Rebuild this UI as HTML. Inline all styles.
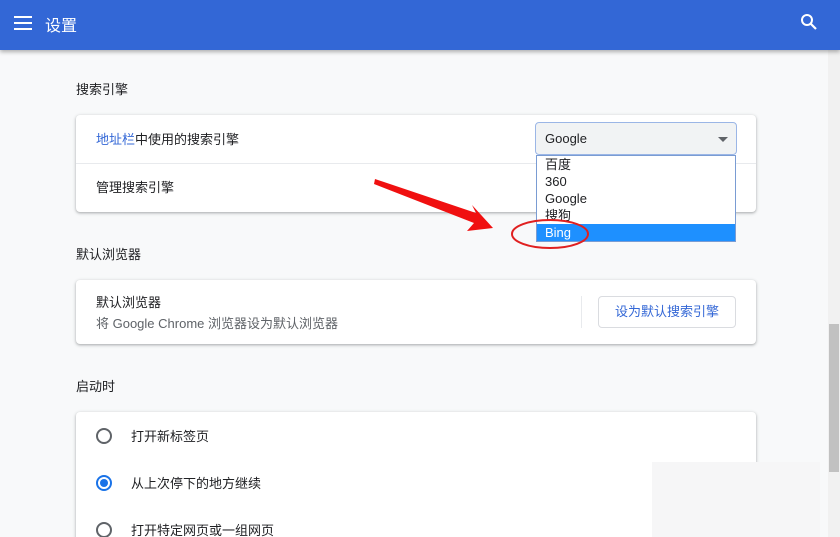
<!DOCTYPE html><html><head><meta charset="utf-8"><style>
*{margin:0;padding:0;box-sizing:border-box}
html,body{width:840px;height:537px;overflow:hidden}
body{background:#f8f9fa;font-family:"Liberation Sans","Noto Sans CJK SC",sans-serif;position:relative;color:#202124;font-size:13px}
.hdr{position:absolute;left:0;top:0;width:840px;height:50px;background:#3367d6;box-shadow:0 2px 4px rgba(0,0,0,.3);z-index:2}
.hdr .t{position:absolute;left:45px;top:12px;color:#fff;font-size:16px}
.card{position:absolute;left:76px;width:680px;background:#fff;border-radius:4px;box-shadow:0 1px 2px rgba(60,64,67,.3),0 1px 3px 1px rgba(60,64,67,.12)}
.lbl{position:absolute;left:76px;font-size:13px;color:#202124}
.abs{position:absolute}
.sb{position:absolute;left:828px;top:50px;width:12px;height:487px;background:#f1f1f1}
</style></head><body>
<div class="hdr">
<svg class="abs" style="left:14px;top:16px" width="18" height="14"><rect y="0" width="18" height="2" fill="#fff"/><rect y="6" width="18" height="2" fill="#fff"/><rect y="12" width="18" height="2" fill="#fff"/></svg>
<div class="t">设置</div>
<svg class="abs" style="left:800px;top:13px" width="18" height="18"><circle cx="7" cy="7" r="5" stroke="#fff" stroke-width="2" fill="none"/><line x1="11" y1="11" x2="16" y2="16" stroke="#fff" stroke-width="2.2"/></svg>
</div>
<div class="lbl" style="top:79px">搜索引擎</div>
<div class="card" style="top:115px;height:97px">
<div class="abs" style="left:20px;top:14px"><span style="color:#3367d6">地址栏</span>中使用的搜索引擎</div>
<div class="abs" style="left:0;top:48px;width:680px;height:1px;background:#e8eaed"></div>
<div class="abs" style="left:20px;top:62px">管理搜索引擎</div>
</div>
<div class="abs" style="left:535px;top:122px;width:202px;height:33px;background:#f1f3f4;border:1px solid #9bb6e6;border-radius:4px;z-index:3">
<div class="abs" style="left:9px;top:8px">Google</div>
<div class="abs" style="left:182px;top:14px;width:0;height:0;border-left:5px solid transparent;border-right:5px solid transparent;border-top:5px solid #5f6368"></div>
</div>
<div class="abs" style="left:536px;top:155px;width:200px;height:87px;background:#fff;border:1px solid #7a9cd3;z-index:3;font-size:13px;line-height:17px">
<div style="padding-left:8px">百度</div><div style="padding-left:8px">360</div><div style="padding-left:8px">Google</div><div style="padding-left:8px">搜狗</div>
<div style="padding-left:8px;background:#1e90ff;color:#fff">Bing</div>
</div>
<svg class="abs" style="left:0;top:0;z-index:4" width="840" height="537">
<polygon points="375,179 476,213 472,205 493,228 467,231 474,223 374,184" fill="#f01010"/>
<ellipse cx="550" cy="234" rx="38" ry="14" fill="none" stroke="#e02020" stroke-width="2"/>
</svg>
<div class="lbl" style="top:244px">默认浏览器</div>
<div class="card" style="top:280px;height:64px">
<div class="abs" style="left:20px;top:12px">默认浏览器</div>
<div class="abs" style="left:20px;top:33px;color:#5f6368">将 Google Chrome 浏览器设为默认浏览器</div>
<div class="abs" style="left:505px;top:16px;width:1px;height:32px;background:#e8eaed"></div>
<div class="abs" style="left:522px;top:16px;width:138px;height:32px;border:1px solid #dadce0;border-radius:4px;color:#3367d6;text-align:center;line-height:29px">设为默认搜索引擎</div>
</div>
<div class="lbl" style="top:376px">启动时</div>
<div class="card" style="top:412px;height:140px">
<div class="abs" style="left:20px;top:16px;width:16px;height:16px;border:2px solid #5f6368;border-radius:50%"></div>
<div class="abs" style="left:55px;top:14px">打开新标签页</div>
<div class="abs" style="left:20px;top:63px;width:16px;height:16px;border:2px solid #1a73e8;border-radius:50%"><div class="abs" style="left:2px;top:2px;width:8px;height:8px;background:#1a73e8;border-radius:50%"></div></div>
<div class="abs" style="left:55px;top:61px">从上次停下的地方继续</div>
<div class="abs" style="left:20px;top:110px;width:16px;height:16px;border:2px solid #5f6368;border-radius:50%"></div>
<div class="abs" style="left:55px;top:108px">打开特定网页或一组网页</div>
</div>
<div class="abs" style="left:652px;top:462px;width:168px;height:75px;background:#f6f6f7"></div>
<div class="sb"><div class="abs" style="left:1px;top:274px;width:10px;height:148px;background:#c1c1c1"></div></div>
</body></html>
